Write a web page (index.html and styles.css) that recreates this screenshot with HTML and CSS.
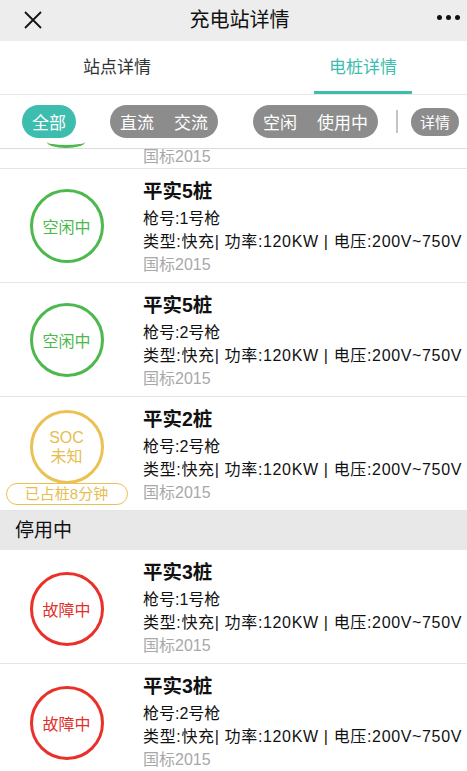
FILE: index.html
```html
<!DOCTYPE html>
<html lang="zh">
<head>
<meta charset="utf-8">
<title>充电站详情</title>
<link rel="stylesheet" href="styles.css">
</head>
<body>
<div class="page">
  <header class="navbar">
    <svg class="nav-close" width="18" height="18" viewBox="0 0 18 18"><path d="M1 1L17 17M17 1L1 17" stroke="#111" stroke-width="1.8" fill="none"/></svg>
    <div class="nav-title">充电站详情</div>
    <div class="nav-more"><span></span><span></span><span></span></div>
  </header>

  <nav class="tabs">
    <div class="tab">站点详情</div>
    <div class="tab active">电桩详情</div>
  </nav>

  <div class="filters">
    <div class="pill pill-active">全部</div>
    <div class="pill pill-gray"><span>直流</span><span>交流</span></div>
    <div class="pill pill-gray"><span>空闲</span><span>使用中</span></div>
    <div class="divider"></div>
    <div class="pill pill-small">详情</div>
    <div class="peek-arc"></div>
  </div>

  <div class="list">
    <div class="card card-partial">
      <div class="status"></div>
      <div class="info info-partial">
        <div class="line muted">国标2015</div>
      </div>
    </div>

    <div class="card">
      <div class="status"><div class="ring ring-green">空闲中</div></div>
      <div class="info">
        <div class="title">平实5桩</div>
        <div class="line">枪号:1号枪</div>
        <div class="line spec">类型:快充| 功率:120KW | 电压:200V~750V</div>
        <div class="line muted">国标2015</div>
      </div>
    </div>

    <div class="card">
      <div class="status"><div class="ring ring-green">空闲中</div></div>
      <div class="info">
        <div class="title">平实5桩</div>
        <div class="line">枪号:2号枪</div>
        <div class="line spec">类型:快充| 功率:120KW | 电压:200V~750V</div>
        <div class="line muted">国标2015</div>
      </div>
    </div>

    <div class="card card-soc">
      <div class="status status-stack">
        <div class="ring ring-yellow"><span>SOC</span><span>未知</span></div>
        <div class="occupied">已占桩8分钟</div>
      </div>
      <div class="info">
        <div class="title">平实2桩</div>
        <div class="line">枪号:2号枪</div>
        <div class="line spec">类型:快充| 功率:120KW | 电压:200V~750V</div>
        <div class="line muted">国标2015</div>
      </div>
    </div>

    <div class="section">停用中</div>

    <div class="card">
      <div class="status"><div class="ring ring-red">故障中</div></div>
      <div class="info">
        <div class="title">平实3桩</div>
        <div class="line">枪号:1号枪</div>
        <div class="line spec">类型:快充| 功率:120KW | 电压:200V~750V</div>
        <div class="line muted">国标2015</div>
      </div>
    </div>

    <div class="card">
      <div class="status"><div class="ring ring-red">故障中</div></div>
      <div class="info">
        <div class="title">平实3桩</div>
        <div class="line">枪号:2号枪</div>
        <div class="line spec">类型:快充| 功率:120KW | 电压:200V~750V</div>
        <div class="line muted">国标2015</div>
      </div>
    </div>
  </div>
</div>
</body>
</html>
```

FILE: styles.css
```css
* { box-sizing: border-box; }
html, body { margin: 0; padding: 0; }
body {
  font-family: "Liberation Sans", "Noto Sans CJK SC", sans-serif;
  color: #111;
  background: #fff;
  width: 467px;
  height: 771px;
  overflow: hidden;
}
.page { width: 467px; }

.navbar {
  height: 41px;
  background: #ededed;
  display: flex;
  align-items: center;
  padding: 0 7px 0 24px;
}
.nav-close { display: block; margin-top: -1px; flex-shrink: 0; }
.nav-title {
  flex: 1;
  text-align: center;
  font-size: 20px;
  color: #111;
  margin-top: -5px;
}
.nav-more { display: flex; gap: 4px; margin-top: -6px; flex-shrink: 0; }
.nav-more span {
  width: 5px; height: 5px; border-radius: 50%; background: #111;
}

.tabs {
  height: 54px;
  display: flex;
  padding-left: 68px;
  gap: 148px;
  border-bottom: 1px solid #e8e8e8;
}
.tab {
  width: 98px;
  text-align: center;
  font-size: 17px;
  line-height: 22px;
  color: #333;
  padding-top: 16px;
  border-bottom: 3px solid transparent;
}
.tab.active { color: #3dbdae; border-bottom-color: #3dbdae; }

.filters {
  height: 54px;
  display: flex;
  align-items: center;
  padding-left: 22px;
  border-bottom: 1px solid #dcdcdc;
  background: #fff;
  position: relative;
}
.pill {
  height: 33px;
  border-radius: 17px;
  font-size: 17px;
  color: #fff;
  display: flex;
  align-items: center;
  gap: 20px;
  padding: 0 10px;
}
.pill-active { background: #3dbdae; width: 54px; justify-content: center; padding: 0; margin-right: 34px; }
.pill-gray { background: #8c8c8c; }
.pill-gray + .pill-gray { margin-left: 35px; }
.divider {
  width: 2px; height: 23px; background: #c4c4c4;
  margin-left: 18px; margin-right: 13px;
}
.pill-small {
  height: 28px;
  font-size: 15px;
  padding: 0 9px;
  background: #8c8c8c;
}
.peek-arc {
  position: absolute;
  left: 47px;
  bottom: 0;
  width: 38px;
  height: 6px;
  border-bottom: 3px solid #4cb84d;
  border-radius: 0 0 50% 50% / 0 0 100% 100%;
}

.list { height: 622px; overflow: hidden; }
.card {
  height: 114px;
  display: flex;
  border-bottom: 1px solid #e5e5e5;
  background: #fff;
}
.card-partial { height: 20px; overflow: hidden; }
.info-partial { padding-top: 0; margin-top: -13px; }
.status {
  width: 133px;
  display: flex;
  align-items: center;
  justify-content: center;
  flex-shrink: 0;
}
.status-stack { flex-direction: column; padding-top: 8px; }
.ring {
  width: 74px; height: 74px;
  border-radius: 50%;
  border: 3px solid;
  display: flex;
  flex-direction: column;
  align-items: center;
  justify-content: center;
  font-size: 16px;
}
.ring-green { border-color: #4cb84d; color: #4cb84d; }
.ring-yellow { border-color: #eac152; color: #e6bd4f; line-height: 19px; }
.ring-red { border-color: #e9312a; color: #e2302a; margin-top: 4px; }
.occupied {
  width: 122px;
  height: 22px;
  margin-top: -1px;
  border: 1.5px solid #eac152;
  border-radius: 11px;
  color: #e6bd4f;
  font-size: 15px;
  line-height: 19px;
  text-align: center;
}
.info {
  margin-left: 10px;
  padding-top: 9px;
  white-space: nowrap;
}
.title {
  font-size: 19.5px;
  font-weight: bold;
  line-height: 26px;
  margin-bottom: 3px;
}
.line {
  font-size: 16px;
  line-height: 23px;
  color: #111;
}
.spec { letter-spacing: 0.65px; }
.muted { color: #a8a8a8; }

.section {
  height: 39px;
  background: #e8e8e8;
  font-size: 19px;
  padding-left: 15px;
  line-height: 39px;
  color: #111;
}
```
